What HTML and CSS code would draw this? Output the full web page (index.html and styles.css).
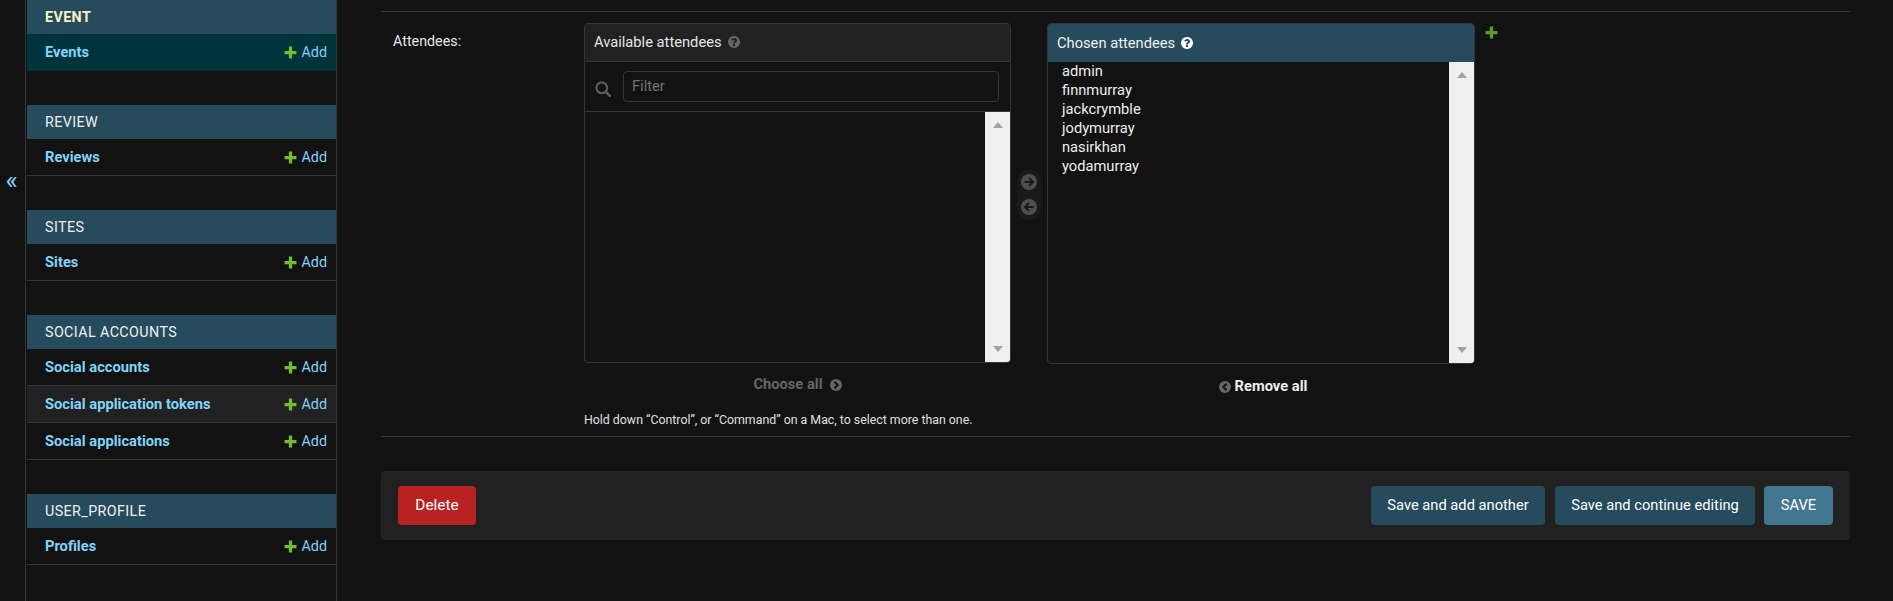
FILE: index.html
```html
<!DOCTYPE html>
<html lang="en">
<head>
  <meta charset="UTF-8" />
  <meta name="viewport" content="width=device-width, initial-scale=1.0"/>
  <title>Change event | Django site admin</title>
  <link rel="stylesheet" href="styles.css">
</head>
<body>

  <svg class="defs" width="0" height="0">
    <symbol id="plus" viewBox="0 0 12 12">
      <path d="M4.500 0.500h3v4h4v3h-4v4h-3v-4h-4v-3h4z" fill="currentColor"/>
    </symbol>
    <symbol id="help" viewBox="0 0 1792 1792">
      <path fill="currentColor" d="M1024 1376v-192q0-14-9-23t-23-9h-192q-14 0-23 9t-9 23v192q0 14 9 23t23 9h192q14 0 23-9t9-23zm256-672q0-88-55.500-163t-138.500-116-170-41q-243 0-371 213-15 24 8 42l132 100q7 6 19 6 16 0 25-12 53-68 86-92 34-24 86-24 48 0 85.500 26t37.500 59q0 38-20 61t-68 45q-63 28-115.500 86.500t-52.500 125.500v36q0 14 9 23t23 9h192q14 0 23-9t9-23q0-19 21.500-49.500t54.500-49.500q32-18 49-28.500t46-35 44.500-48 28-60.500 12.500-81zm384 192q0 209-103 385.500t-279.500 279.500-385.500 103-385.500-103-279.500-279.500-103-385.500 103-385.500 279.500-279.500 385.500-103 385.500 103 279.500 279.500 103 385.500z"/>
    </symbol>
    <symbol id="search" viewBox="0 0 16 16">
      <circle cx="6.800" cy="6.800" r="5.400" fill="none" stroke="currentColor" stroke-width="2.200"/>
      <path d="M10.800 10.800l4 4" fill="none" stroke="currentColor" stroke-width="2.600" stroke-linecap="round"/>
    </symbol>
    <symbol id="arrow-right" viewBox="0 0 16 16">
      <circle cx="8" cy="8" r="8" fill="currentColor"/>
      <path d="M3.500 8h8M8 4l4 4-4 4" fill="none" stroke="#1a1a1a" stroke-width="2"/>
    </symbol>
    <symbol id="arrow-left" viewBox="0 0 16 16">
      <circle cx="8" cy="8" r="8" fill="currentColor"/>
      <path d="M12.500 8h-8M8 4l-4 4 4 4" fill="none" stroke="#1a1a1a" stroke-width="2"/>
    </symbol>
    <symbol id="chevron-right" viewBox="0 0 12 12">
      <circle cx="6" cy="6" r="6" fill="currentColor"/>
      <path d="M4.500 2.800l3.200 3.200-3.200 3.200" fill="none" stroke="#121212" stroke-width="2"/>
    </symbol>
    <symbol id="chevron-left" viewBox="0 0 12 12">
      <circle cx="6" cy="6" r="6" fill="currentColor"/>
      <path d="M7.500 2.800l-3.200 3.200 3.200 3.200" fill="none" stroke="#121212" stroke-width="2"/>
    </symbol>
  </svg>

  <div class="page">
    <button class="toggle-nav" type="button">«</button>

    <nav class="sidebar">
      <div class="app current-app">
        <div class="caption">Event</div>
        <div class="model current-model">
          <a class="model-link" href="#">Events</a>
          <a class="add-link" href="#"><svg class="icon-add"><use href="#plus"/></svg>Add</a>
        </div>
      </div>
      <div class="app">
        <div class="caption">Review</div>
        <div class="model">
          <a class="model-link" href="#">Reviews</a>
          <a class="add-link" href="#"><svg class="icon-add"><use href="#plus"/></svg>Add</a>
        </div>
      </div>
      <div class="app">
        <div class="caption">Sites</div>
        <div class="model">
          <a class="model-link" href="#">Sites</a>
          <a class="add-link" href="#"><svg class="icon-add"><use href="#plus"/></svg>Add</a>
        </div>
      </div>
      <div class="app">
        <div class="caption">Social Accounts</div>
        <div class="model">
          <a class="model-link" href="#">Social accounts</a>
          <a class="add-link" href="#"><svg class="icon-add"><use href="#plus"/></svg>Add</a>
        </div>
        <div class="model hovered">
          <a class="model-link" href="#">Social application tokens</a>
          <a class="add-link" href="#"><svg class="icon-add"><use href="#plus"/></svg>Add</a>
        </div>
        <div class="model">
          <a class="model-link" href="#">Social applications</a>
          <a class="add-link" href="#"><svg class="icon-add"><use href="#plus"/></svg>Add</a>
        </div>
      </div>
      <div class="app">
        <div class="caption">User_Profile</div>
        <div class="model">
          <a class="model-link" href="#">Profiles</a>
          <a class="add-link" href="#"><svg class="icon-add"><use href="#plus"/></svg>Add</a>
        </div>
      </div>
    </nav>

    <main class="content">
      <form>
        <div class="form-row">
          <label class="row-label">Attendees:</label>
          <div class="field">
            <div class="selector">
              <div class="selector-col">
                <div class="box box-available">
                  <h2 class="box-title">Available attendees <svg class="icon-help"><use href="#help"/></svg></h2>
                  <div class="filter">
                    <svg class="icon-search"><use href="#search"/></svg>
                    <input class="filter-input" type="text" placeholder="Filter" />
                  </div>
                  <div class="list">
                    <ul class="options"></ul>
                    <div class="scrollbar"><span class="arrow-up"></span><span class="arrow-down"></span></div>
                  </div>
                </div>
                <a class="choose-all" href="#">Choose all <svg class="icon-small"><use href="#chevron-right"/></svg></a>
              </div>

              <div class="chooser">
                <svg class="icon-move"><use href="#arrow-right"/></svg>
                <svg class="icon-move"><use href="#arrow-left"/></svg>
              </div>

              <div class="selector-col">
                <div class="box box-chosen">
                  <h2 class="box-title title-chosen">Chosen attendees <svg class="icon-help"><use href="#help"/></svg></h2>
                  <div class="list">
                    <ul class="options">
                      <li>admin</li>
                      <li>finnmurray</li>
                      <li>jackcrymble</li>
                      <li>jodymurray</li>
                      <li>nasirkhan</li>
                      <li>yodamurray</li>
                    </ul>
                    <div class="scrollbar"><span class="arrow-up"></span><span class="arrow-down"></span></div>
                  </div>
                </div>
                <a class="remove-all" href="#"><svg class="icon-small"><use href="#chevron-left"/></svg> Remove all</a>
              </div>

              <a class="related-add" href="#"><svg class="icon-add"><use href="#plus"/></svg></a>
            </div>
            <p class="help">Hold down “Control”, or “Command” on a Mac, to select more than one.</p>
          </div>
        </div>

        <div class="submit-row">
          <a class="btn btn-delete" href="#">Delete</a>
          <a class="btn btn-another" href="#">Save and add another</a>
          <a class="btn btn-continue" href="#">Save and continue editing</a>
          <a class="btn btn-save" href="#">SAVE</a>
        </div>
      </form>
    </main>
  </div>

</body>
</html>
```

FILE: styles.css
```css
* {
  box-sizing: border-box;
}
html, body {
  height: 100%;
}
body {
  margin: 0;
  background: #121212;
  color: #eeeeee;
  font-family: Roboto, "Liberation Sans", sans-serif;
  font-size: 14.7px;
  overflow: hidden;
}
a {
  text-decoration: none;
}
.defs {
  display: block;
}
.page {
  display: flex;
  height: 601px;
}

/* sidebar */
.toggle-nav {
  display: flex;
  justify-content: center;
  align-items: flex-start;
  width: 26px;
  height: 601px;
  flex: none;
  padding: 163px 2px 0 0;
  background: #121212;
  border: none;
  border-right: 1px solid #353535;
  color: #81d4fa;
  font-family: Roboto, sans-serif;
  font-size: 26px;
  line-height: 34px;
}
.sidebar {
  width: 311px;
  flex: none;
  padding-left: 1px;
  border-right: 1px solid #353535;
}
.app {
  margin-bottom: 34px;
}
.caption {
  height: 34px;
  padding-left: 18px;
  background: #264b5d;
  color: #f0f0f0;
  font-size: 14.3px;
  letter-spacing: 0.4px;
  line-height: 34px;
  text-transform: uppercase;
}
.current-app .caption {
  color: #f7f3c4;
  font-weight: 700;
}
.model {
  display: flex;
  justify-content: space-between;
  align-items: center;
  height: 37px;
  padding: 0 9px 0 18px;
  border-bottom: 1px solid #353535;
}
.current-model {
  background: #00333b;
  border-bottom-color: #00333b;
}
.hovered {
  background: #212121;
}
.model-link {
  color: #81d4fa;
  font-weight: 700;
}
.add-link {
  display: flex;
  align-items: center;
  color: #81d4fa;
  font-size: 14.3px;
}
.icon-add {
  display: block;
  width: 13px;
  height: 13px;
  margin-right: 5px;
  color: #70bf2b;
}

/* form */
.content {
  flex: 1;
  padding: 11px 43px 0 44px;
}
.form-row {
  display: flex;
  height: 426px;
  padding: 11px 0 10px 12px;
  border-top: 1px solid #353535;
  border-bottom: 1px solid #353535;
}
.row-label {
  width: 191px;
  flex: none;
  padding-top: 10px;
  color: #e6e6e6;
  font-size: 14.3px;
}
.selector {
  display: flex;
  align-items: flex-start;
}
.selector-col {
  display: flex;
  flex-direction: column;
}
.box {
  display: flex;
  flex-direction: column;
  border: 1px solid #353535;
  border-radius: 4px;
  overflow: hidden;
}
.box-available {
  width: 427px;
  height: 340px;
}
.box-chosen {
  width: 428px;
  height: 341px;
}
.box-title {
  flex: none;
  display: flex;
  align-items: center;
  height: 38px;
  margin: 0;
  padding: 0 9px 1px;
  background: #212121;
  border-bottom: 1px solid #353535;
  color: #e6e6e6;
  font-size: 14.7px;
  font-weight: 400;
}
.title-chosen {
  background: #264b5d;
  border-bottom: none;
  color: #f0f0f0;
}
.icon-help {
  width: 14px;
  height: 14px;
  margin-left: 5px;
  color: #666666;
}
.title-chosen .icon-help {
  color: #ffffff;
}
.filter {
  flex: none;
  display: flex;
  align-items: center;
  height: 50px;
  padding: 0 11px 0 10px;
  border-bottom: 1px solid #353535;
}
.icon-search {
  width: 16px;
  height: 16px;
  margin: 4px 12px 0 0;
  flex: none;
  color: #5c5c5c;
}
.filter-input {
  flex: 1;
  height: 31px;
  padding: 0 8px 2px;
  background: #121212;
  border: 1px solid #353535;
  border-radius: 4px;
  color: #eeeeee;
  font-family: Roboto, sans-serif;
  font-size: 14.7px;
}
.filter-input::placeholder {
  color: #757575;
}
.list {
  flex: 1;
  display: flex;
  min-height: 0;
}
.options {
  flex: 1;
  margin: 0;
  padding: 0 0 0 14px;
  list-style: none;
  line-height: 19px;
}
.scrollbar {
  width: 25px;
  flex: none;
  display: flex;
  flex-direction: column;
  justify-content: space-between;
  align-items: center;
  padding: 10px 0;
  background: #f0f0f0;
}
.arrow-up {
  border: 5px solid transparent;
  border-top: none;
  border-bottom: 6px solid #a3a3a3;
}
.arrow-down {
  border: 5px solid transparent;
  border-bottom: none;
  border-top: 6px solid #a3a3a3;
}
.chooser {
  flex: none;
  display: flex;
  flex-direction: column;
  gap: 9px;
  width: 24px;
  margin: 146px 6px 0;
  padding: 5px 4px;
  background: #1a1a1a;
  border-radius: 12px;
}
.icon-move {
  width: 16px;
  height: 16px;
  color: #4f4f4f;
}
.choose-all, .remove-all {
  display: flex;
  justify-content: center;
  align-items: center;
  font-weight: 700;
}
.choose-all {
  gap: 7px;
  margin-top: 12px;
  color: #666666;
}
.remove-all {
  gap: 4px;
  margin-top: 13px;
  padding-left: 4px;
  color: #eeeeee;
}
.icon-small {
  width: 12px;
  height: 12px;
  margin-top: 2px;
  color: #666666;
}
.related-add {
  display: block;
  margin: 3px 0 0 10px;
}
.related-add .icon-add {
  color: #5f9f28;
}
.help {
  margin: 17px 0 0;
  color: #e0e0e0;
  font-size: 12.35px;
  line-height: 16px;
}

/* buttons */
.submit-row {
  display: flex;
  align-items: center;
  gap: 10px;
  height: 69px;
  margin-top: 34px;
  padding: 0 17px;
  background: #212121;
  border-radius: 4px;
}
.btn {
  display: flex;
  align-items: center;
  justify-content: center;
  height: 39px;
  padding-bottom: 1px;
  background: #264b5d;
  border-radius: 4px;
  color: #ffffff;
  font-size: 14.7px;
}
.btn-delete {
  width: 78px;
  margin-right: auto;
  background: #ba2121;
  font-size: 15.4px;
}
.btn-another {
  width: 174px;
}
.btn-continue {
  width: 200px;
}
.btn-save {
  width: 69px;
  margin-left: -1px;
  background: #417690;
}
```
